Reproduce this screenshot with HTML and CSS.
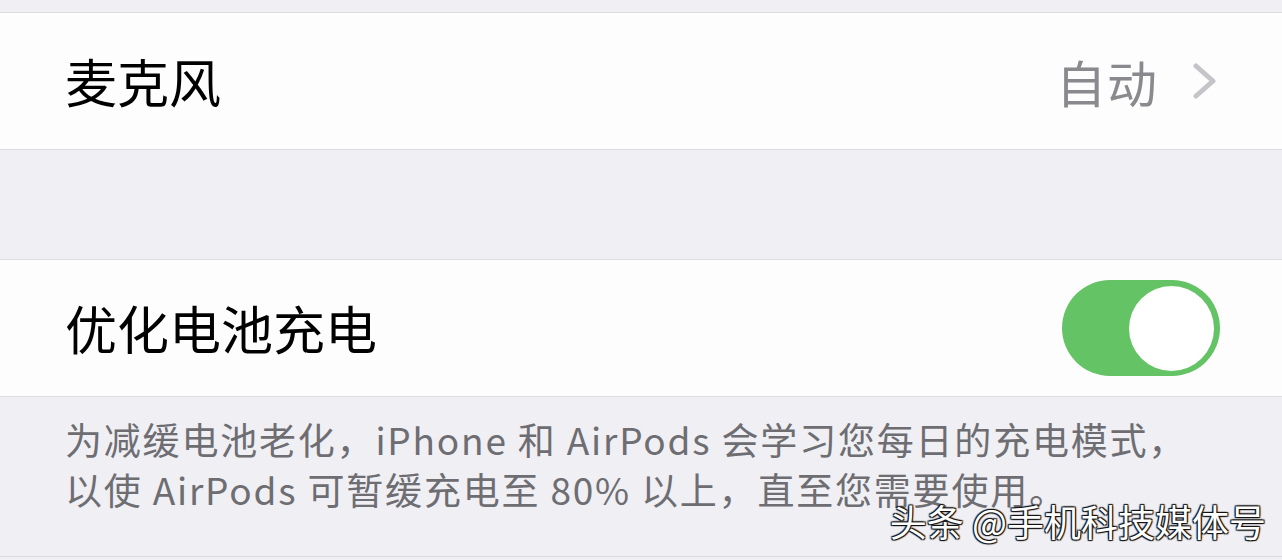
FILE: index.html
```html
<!DOCTYPE html>
<html>
<head>
    <meta charset="utf-8" />
    <title>电池设置</title>
    <link rel="stylesheet" href="styles.css">
</head>
<body>
    <div class="gapTop"></div>

    <div class="row">
        <span class="label">麦克风</span>
        <div class="detail">
            <span class="value">自动</span>
            <svg class="chevron" width="26" height="36" viewBox="0 0 26 36">
                <polyline points="4,3 21,18 4,33" fill="none" stroke="#c5c5c9" stroke-width="5" stroke-linecap="round" stroke-linejoin="round" />
            </svg>
        </div>
    </div>

    <div class="gapMid"></div>

    <div class="row">
        <span class="label">优化电池充电</span>
        <div class="toggle on">
            <div class="knob"></div>
        </div>
    </div>

    <div class="footer">
        <p class="note">为减缓电池老化，iPhone 和 AirPods 会学习您每日的充电模式，<br>以使 AirPods 可暂缓充电至 80% 以上，直至您需要使用。</p>
        <span class="mark">头条 @手机科技媒体号</span>
    </div>
</body>
</html>
```

FILE: styles.css
```css
body {
    margin: 0;
    background: #efeff4;
    font-family: "Noto Sans CJK SC", "Noto Sans", sans-serif;
    color: #000;
}

.gapTop {
    height: 12px;
    border-bottom: 1px solid #dcdcdf;
}

.gapMid {
    height: 109px;
}

.row {
    display: flex;
    align-items: center;
    justify-content: space-between;
    height: 136px;
    padding: 0 62px 0 65px;
    background: #fdfdfe;
    border-bottom: 1px solid #dcdcdf;
}

.gapMid + .row {
    border-top: 1px solid #dcdcdf;
}

.label {
    font-size: 52px;
    line-height: 1;
}

.detail {
    display: flex;
    align-items: center;
    gap: 34px;
    padding-right: 2px;
}

.value {
    font-size: 50px;
    color: #8a8a8e;
    line-height: 1;
    letter-spacing: 1px;
}

.chevron {
    display: block;
}

.toggle {
    width: 158px;
    height: 96px;
    border-radius: 48px;
    background: #e5e5ea;
    display: flex;
    align-items: center;
    padding: 0 6px;
    box-sizing: border-box;
}

.toggle.on {
    background: #64c364;
    justify-content: flex-end;
}

.knob {
    width: 85px;
    height: 85px;
    border-radius: 50%;
    background: #fff;
}

.footer {
    position: relative;
    height: 160px;
    padding: 17px 0 0 65px;
    box-sizing: border-box;
    border-bottom: 1px solid #dcdcdf;
}

.note {
    margin: 0;
    font-size: 37px;
    line-height: 50px;
    color: #6d6d72;
    letter-spacing: 1.8px;
}

.mark {
    position: absolute;
    right: 16px;
    bottom: 8px;
    font-size: 37px;
    color: #fff;
    text-shadow: 1px 1px 1px #111, -1px -1px 1px #111, 1px -1px 1px #111, -1px 1px 1px #111;
}
```
